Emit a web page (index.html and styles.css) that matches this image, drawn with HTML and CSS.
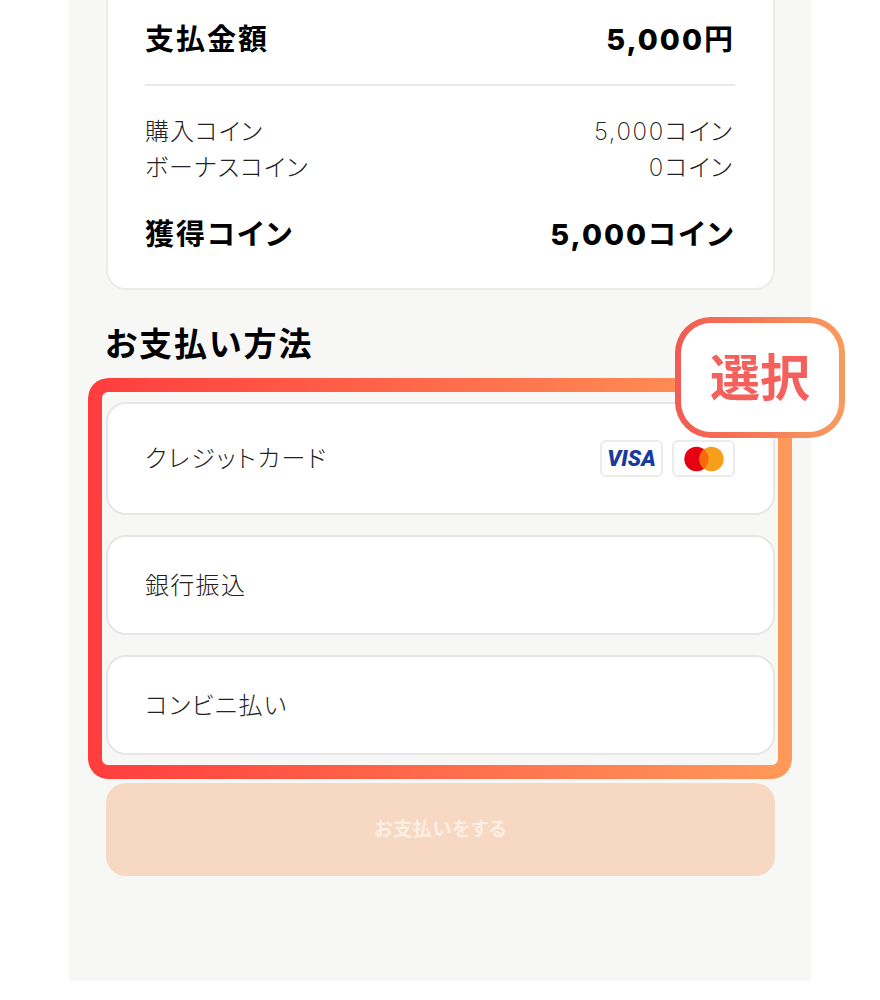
FILE: index.html
```html
<!DOCTYPE html>
<html lang="ja">
<head>
    <meta charset="UTF-8">
    <meta name="viewport" content="width=device-width, initial-scale=1.0">
    <title>お支払い方法</title>
    <link rel="stylesheet" href="styles.css">
</head>
<body>
    <div class="panel">
        <div class="card">
            <div class="total">
                <span>支払金額</span>
                <span><span class="num">5,000</span>円</span>
            </div>
            <div class="breakdown">
                <div class="line"><span>購入コイン</span><span class="value"><span class="num">5,000</span>コイン</span></div>
                <div class="line"><span>ボーナスコイン</span><span class="value"><span class="num">0</span>コイン</span></div>
            </div>
            <div class="total earned">
                <span>獲得コイン</span>
                <span><span class="num">5,000</span>コイン</span>
            </div>
        </div>

        <h2 class="pay-title">お支払い方法</h2>

        <div class="methods">
            <div class="method first">
                <span>クレジットカード</span>
                <div class="brands">
                    <div class="brand"><span class="visa">VISA</span></div>
                    <div class="brand">
                        <svg class="mc" width="40" height="26" viewBox="0 0 40 26">
                            <circle cx="12.5" cy="13" r="12.2" fill="#e60012"/>
                            <circle cx="27.5" cy="13" r="12.2" fill="#f79e1b"/>
                            <path d="M20 3.38A12.2 12.2 0 0 1 20 22.62A12.2 12.2 0 0 1 20 3.38z" fill="#f96a0c"/>
                        </svg>
                    </div>
                </div>
            </div>
            <div class="method">銀行振込</div>
            <div class="method">コンビニ払い</div>

            <div class="frame"></div>
            <div class="badge">選択</div>
        </div>

        <button class="pay-button">お支払いをする</button>
    </div>
</body>
</html>
```

FILE: styles.css
```css
* {
    box-sizing: border-box;
}
body {
    margin: 0;
    background-color: #fff;
    color: #111;
    font-family: "Noto Sans CJK JP", sans-serif;
    font-feature-settings: "palt";
}
.panel {
    width: 742px;
    height: 981px;
    margin-left: 69px;
    padding: 0 36px 0 37px;
    background-color: #f7f7f5;
}
.card {
    padding: 0 38px 34px 37px;
    background-color: #fff;
    border: 2px solid #ebebeb;
    border-top: none;
    border-radius: 0 0 20px 20px;
}
.total {
    display: flex;
    justify-content: space-between;
    align-items: center;
    height: 78px;
    padding-bottom: 4px;
    font-size: 29px;
    font-weight: 700;
    letter-spacing: 2px;
    color: #000;
}
.total .num {
    font-weight: 800;
    letter-spacing: 2px;
}
.value {
    margin-right: 2px;
}
.breakdown {
    margin-top: 6px;
    padding-top: 26px;
    border-top: 2px solid #e8e8e8;
}
.line {
    display: flex;
    justify-content: space-between;
    height: 36px;
    font-size: 24px;
    font-weight: 300;
    letter-spacing: 1px;
    line-height: 36px;
    color: #222;
}
.line .num {
    font-weight: 200;
    letter-spacing: 1.6px;
}
.earned {
    height: 40px;
    margin-top: 30px;
}
.num {
    font-family: "Inter", "Noto Sans CJK JP", sans-serif;
}
.pay-title {
    margin: 30px 0 38px -1px;
    font-size: 33px;
    font-weight: 700;
    letter-spacing: 2px;
    line-height: 44px;
    color: #000;
}
.methods {
    position: relative;
    display: flex;
    flex-direction: column;
    gap: 20px;
}
.method {
    display: flex;
    justify-content: space-between;
    align-items: center;
    height: 100px;
    padding: 0 38px 4px 37px;
    background-color: #fff;
    border: 2px solid #e6e6e6;
    border-radius: 20px;
    font-size: 24px;
    font-weight: 300;
    letter-spacing: 1.3px;
    color: #222;
}
.method.first {
    height: 113px;
    letter-spacing: 1.8px;
}
.brands {
    display: flex;
    gap: 9px;
    margin-top: 4px;
}
.brand {
    display: flex;
    justify-content: center;
    align-items: center;
    width: 63px;
    height: 37px;
    background-color: #fff;
    border: 2px solid #ebebeb;
    border-radius: 6px;
}
.visa {
    font-family: "Roboto", sans-serif;
    font-size: 22px;
    font-weight: 900;
    font-style: italic;
    letter-spacing: 0;
    color: #1a3a9c;
}
.frame {
    position: absolute;
    top: -24px;
    left: -18px;
    right: -17px;
    bottom: -24px;
    border: 14px solid transparent;
    border-radius: 20px;
    background: linear-gradient(90deg, #ff3d3d, #ff9a5a) border-box;
    -webkit-mask: linear-gradient(#000 0 0) padding-box, linear-gradient(#000 0 0);
    -webkit-mask-composite: xor;
    mask-composite: exclude;
}
.badge {
    position: absolute;
    top: -85px;
    right: -70px;
    display: flex;
    justify-content: center;
    align-items: center;
    width: 170px;
    height: 121px;
    padding-bottom: 8px;
    border: 6px solid transparent;
    border-radius: 36px;
    background: linear-gradient(#fff, #fff) padding-box, linear-gradient(90deg, #f25a52, #f89c5e) border-box;
    font-size: 50px;
    font-weight: 700;
    color: #f4605c;
}
.pay-button {
    display: block;
    width: 100%;
    height: 93px;
    margin-top: 28px;
    padding: 0 0 4px;
    background-color: #f7d8c2;
    border: none;
    border-radius: 20px;
    font-family: inherit;
    font-feature-settings: inherit;
    font-size: 19px;
    font-weight: 700;
    letter-spacing: 0.7px;
    color: rgba(255, 255, 255, 0.6);
}
```
